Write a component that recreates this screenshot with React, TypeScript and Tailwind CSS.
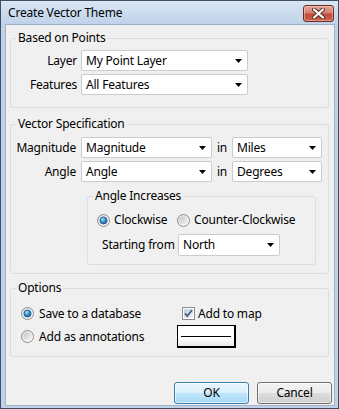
import React from "react";

function Arrow() {
  return (
    <svg width="7" height="4" viewBox="0 0 7 4" className="shrink-0">
      <path d="M0 0H7L3.5 4Z" fill="#000" />
    </svg>
  );
}

function Select({ value, className }: { value: string; className: string }) {
  return (
    <div
      className={`flex items-center justify-between bg-white border border-[#c9cdd2] rounded-[2px] pl-[4px] pr-[5px] ${className}`}
    >
      <span className="leading-none whitespace-nowrap">{value}</span>
      <Arrow />
    </div>
  );
}

function Radio({ checked }: { checked?: boolean }) {
  return (
    <svg width="13" height="13" viewBox="0 0 13 13" className="shrink-0">
      <defs>
        <linearGradient id="rOuter" x1="0" y1="0" x2="1" y2="1">
          <stop offset="0" stopColor="#dcdcdc" />
          <stop offset="1" stopColor="#ffffff" />
        </linearGradient>
        <linearGradient id="rUn" x1="0" y1="0" x2="1" y2="1">
          <stop offset="0" stopColor="#c5c5c5" />
          <stop offset="1" stopColor="#f5f5f5" />
        </linearGradient>
        <radialGradient id="rDot" cx="0.4" cy="0.35" r="0.7">
          <stop offset="0" stopColor="#a6e0ff" />
          <stop offset="0.5" stopColor="#3a93d3" />
          <stop offset="1" stopColor="#1b4f80" />
        </radialGradient>
      </defs>
      <circle cx="6.5" cy="6.5" r="6" fill="url(#rOuter)" stroke="#8b8d8f" strokeWidth="1" />
      {checked ? (
        <circle cx="6.5" cy="6.5" r="3.6" fill="url(#rDot)" stroke="#235a8a" strokeWidth="0.8" />
      ) : (
        <circle cx="6.5" cy="6.5" r="4" fill="url(#rUn)" />
      )}
    </svg>
  );
}

function Checkbox() {
  return (
    <svg width="13" height="13" viewBox="0 0 13 13" className="shrink-0">
      <defs>
        <linearGradient id="cbIn" x1="0" y1="0" x2="1" y2="1">
          <stop offset="0" stopColor="#c3cbd6" />
          <stop offset="1" stopColor="#f4f6f9" />
        </linearGradient>
      </defs>
      <rect x="0.5" y="0.5" width="12" height="12" fill="#ffffff" stroke="#8b8d8f" />
      <rect x="2" y="2" width="9" height="9" fill="url(#cbIn)" />
      <path d="M3 6.3L5.3 9L10 3" fill="none" stroke="#4b5f95" strokeWidth="1.9" />
    </svg>
  );
}

function CloseButton() {
  return (
    <div className="w-[31px] h-[17px] rounded-[3px] border border-[#6e2b22] bg-[linear-gradient(to_bottom,#e3a497_0%,#d4826f_45%,#c04d3a_55%,#c8634e_100%)] flex items-center justify-center shadow-[inset_0_0_0_1px_rgba(255,220,210,0.45)]">
      <svg width="13" height="11" viewBox="0 0 13 11">
        <path d="M2 1.5L11 9.5M11 1.5L2 9.5" stroke="#5a2620" strokeWidth="4" strokeLinecap="round" />
        <path d="M2 1.5L11 9.5M11 1.5L2 9.5" stroke="#ffffff" strokeWidth="2.2" strokeLinecap="round" />
      </svg>
    </div>
  );
}

function Group({
  title,
  className,
  children,
}: {
  title: string;
  className: string;
  children: React.ReactNode;
}) {
  return (
    <fieldset className={`border border-[#d5dfe5] rounded-[3px] ${className}`}>
      <legend className="ml-[5px] px-[2px] leading-[16px] h-[16px]">{title}</legend>
      {children}
    </fieldset>
  );
}

export default function App() {
  return (
    <div className="w-[339px] h-[409px] bg-[#bfd2e9] border border-[#3d4f63] flex flex-col font-['Noto_Sans',sans-serif] text-[12px] tracking-[-0.2px] text-black select-none">
      <div className="h-[23px] shrink-0 flex items-center justify-between pl-[7px] pr-[4px] pt-[1px] bg-[linear-gradient(to_bottom,#d9e6f5,#bfd2e9)]">
        <span className="leading-none">Create Vector Theme</span>
        <CloseButton />
      </div>
      <div className="flex-1 ml-[4px] mr-[3px] mb-[2px] bg-[#f0f0f0] border border-[#9fb2c7] flex flex-col">
        <Group title="Based on Points" className="mt-[5px] ml-[4px] w-[319px]">
          <div className="flex flex-col gap-[3px] pt-[4px] pb-[12px]">
            <div className="flex items-center">
              <span className="w-[70px] pr-[4px] text-right">Layer</span>
              <Select value="My Point Layer" className="w-[167px] h-[21px]" />
            </div>
            <div className="flex items-center">
              <span className="w-[70px] pr-[4px] text-right">Features</span>
              <Select value="All Features" className="w-[167px] h-[21px]" />
            </div>
          </div>
        </Group>

        <Group title="Vector Specification" className="mt-[8px] ml-[4px] w-[319px]">
          <div className="flex flex-col pt-[5px] pb-[8px]">
            <div className="flex flex-col gap-[3px]">
              <div className="flex items-center">
                <span className="w-[70px] pr-[5px] text-right">Magnitude</span>
                <Select value="Magnitude" className="w-[131px] h-[21px]" />
                <span className="w-[20px] text-center">in</span>
                <Select value="Miles" className="w-[90px] h-[21px]" />
              </div>
              <div className="flex items-center">
                <span className="w-[70px] pr-[5px] text-right">Angle</span>
                <Select value="Angle" className="w-[131px] h-[21px]" />
                <span className="w-[20px] text-center">in</span>
                <Select value="Degrees" className="w-[90px] h-[21px]" />
              </div>
            </div>
            <Group title="Angle Increases" className="mt-[6px] ml-[76px] w-[229px]">
              <div className="flex flex-col gap-[6px] pt-[8px] pb-[8px]">
                <div className="flex items-center h-[16px] pl-[9px]">
                  <div className="flex items-center gap-[4px] w-[80px]">
                    <Radio checked />
                    <span>Clockwise</span>
                  </div>
                  <div className="flex items-center gap-[4px]">
                    <Radio />
                    <span>Counter-Clockwise</span>
                  </div>
                </div>
                <div className="flex items-center pl-[14px]">
                  <span className="w-[76px]">Starting from</span>
                  <Select value="North" className="w-[102px] h-[22px]" />
                </div>
              </div>
            </Group>
          </div>
        </Group>

        <Group title="Options" className="mt-[6px] ml-[4px] w-[319px]">
          <div className="flex flex-col gap-[3px] pt-[9px] pb-[8px] pl-[10px]">
            <div className="flex items-center h-[17px]">
              <div className="flex items-center gap-[5px] w-[161px]">
                <Radio checked />
                <span>Save to a database</span>
              </div>
              <div className="flex items-center gap-[3px]">
                <Checkbox />
                <span>Add to map</span>
              </div>
            </div>
            <div className="flex items-center h-[23px]">
              <div className="flex items-center gap-[5px] w-[156px]">
                <Radio />
                <span>Add as annotations</span>
              </div>
              <div className="w-[59px] h-[23px] bg-[linear-gradient(to_bottom,#ffffff_0%,#ffffff_60%,#e8e8e8_100%)] border border-black border-r-2 border-b-2 flex items-center px-[3px]">
                <div className="h-[1px] w-full bg-black" />
              </div>
            </div>
          </div>
        </Group>

        <div className="flex-1 flex items-end justify-end gap-[8px] pr-[2px] pb-[1px]">
          <div className="w-[75px] h-[22px] rounded-[3px] border border-[#3c7fb1] bg-[linear-gradient(to_bottom,#eaf6fd_0%,#d9f0fc_50%,#bee6fd_51%,#a7d9f5_100%)] shadow-[inset_0_0_0_1px_rgba(255,255,255,0.6)] flex items-center justify-center">
            OK
          </div>
          <div className="w-[75px] h-[22px] rounded-[3px] border border-[#707070] bg-[linear-gradient(to_bottom,#f2f2f2_0%,#ebebeb_50%,#dddddd_51%,#cfcfcf_100%)] shadow-[inset_0_0_0_1px_rgba(255,255,255,0.6)] flex items-center justify-center">
            Cancel
          </div>
        </div>
      </div>
    </div>
  );
}
